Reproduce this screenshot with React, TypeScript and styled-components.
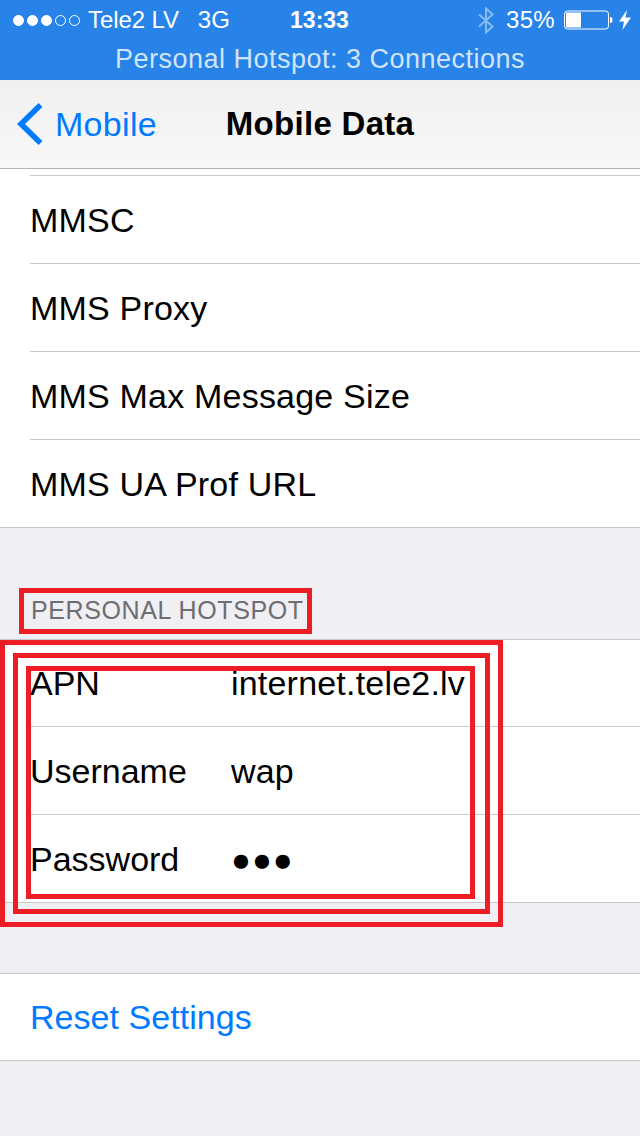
import { createGlobalStyle, styled } from "styled-components"

const Global = createGlobalStyle`
    html, body {
        margin: 0;
        padding: 0;
        background: #efeff4;
        font-family: "Liberation Sans", Arial, sans-serif;
    }
`

const Page = styled.div`
    width: 640px;
    height: 1136px;
    overflow: hidden;
    background: #efeff4;
`

const StatusBar = styled.header`
    height: 80px;
    background: #2783e8;
    color: #fff;
`

const StatusRow = styled.div`
    height: 40px;
    padding: 0 9px 0 13px;
    display: grid;
    grid-template-columns: 1fr auto 1fr;
    align-items: center;
    font-size: 24px;
`

const StatusLeft = styled.div`
    display: flex;
    align-items: center;
`

const StatusRight = styled.div`
    display: flex;
    align-items: center;
    justify-content: flex-end;
`

const Signal = styled.div`
    display: flex;
    gap: 3px;
    margin-right: 8px;
`

const SignalDot = styled.span<{ $on: boolean }>`
    width: 11px;
    height: 11px;
    box-sizing: border-box;
    border-radius: 50%;
    border: 1px solid #fff;
    background: ${(p) => (p.$on ? "#fff" : "transparent")};
`

const Carrier = styled.span`
    margin-right: 19px;
    letter-spacing: -0.1px;
`

const Clock = styled.span`
    margin-right: 5px;
    font-weight: 700;
    font-size: 23px;
`

const Percent = styled.span`
    margin: 0 9px 0 12px;
    letter-spacing: 0.3px;
`

const BoltSlot = styled.span`
    display: flex;
    margin-left: 6px;
`

const HotspotLine = styled.div`
    height: 40px;
    margin-top: -1px;
    display: flex;
    align-items: center;
    justify-content: center;
    font-size: 27px;
    letter-spacing: 0.5px;
    color: rgba(255, 255, 255, 0.8);
`

const NavBar = styled.nav`
    height: 88px;
    display: grid;
    grid-template-columns: 1fr auto 1fr;
    align-items: center;
    background: linear-gradient(#f0f0f0, #f8f8f8);
    border-bottom: 1px solid #b2b2b2;
`

const BackLink = styled.div`
    display: flex;
    align-items: center;
    gap: 12px;
    padding-left: 17px;
    font-size: 34px;
    letter-spacing: 0.3px;
    color: #007aff;
`

const Title = styled.h1`
    margin: 0;
    font-size: 33px;
    font-weight: 700;
    letter-spacing: 0.3px;
    color: #000;
`

const List = styled.section`
    position: relative;
    background: #fff;
    border-bottom: 1px solid #c8c7cc;
`

const TopList = styled(List)`
    padding-left: 30px;
`

const BorderedList = styled(List)`
    border-top: 1px solid #c8c7cc;
`

const ClippedRow = styled.div`
    height: 6px;
    border-bottom: 1px solid #c8c7cc;
`

const Row = styled.div`
    box-sizing: border-box;
    height: 88px;
    padding-top: 2px;
    display: flex;
    align-items: center;
    font-size: 34px;
    letter-spacing: 0.2px;
    color: #000;
    border-bottom: 1px solid #c8c7cc;
    &:last-child {
        height: 87px;
        border-bottom: none;
    }
`

const InsetRows = styled.div`
    margin-top: -1px;
    padding-left: 30px;
`

const Label = styled.span`
    width: 201px;
    letter-spacing: 0;
`

const Masked = styled.span`
    font-size: 33px;
    letter-spacing: 1px;
`

const ActionRow = styled(Row)`
    padding: 0 0 0 30px;
    &:last-child {
        height: 86px;
    }
    letter-spacing: 0.05px;
    color: #007aff;
`

const SectionHeader = styled.div`
    position: relative;
    height: 111px;
    box-sizing: border-box;
    padding: 67px 0 0 31px;
    font-size: 25px;
    letter-spacing: 0.6px;
    line-height: 30px;
    color: #6d6d72;
`

const ResetGap = styled.div`
    height: 70px;
`

const Annotation = styled.div<{ $top: number; $left: number; $width: number; $height: number }>`
    position: absolute;
    top: ${(p) => p.$top}px;
    left: ${(p) => p.$left}px;
    width: ${(p) => p.$width}px;
    height: ${(p) => p.$height}px;
    box-sizing: border-box;
    border: 5px solid #ee1c25;
    pointer-events: none;
`

function Bluetooth() {
    return (
        <svg width="16" height="27" viewBox="0 0 16 27" fill="none" stroke="#fff" strokeOpacity="0.45" strokeWidth="2">
            <path d="M1 7.5 L14.5 19.5 L8 25.5 V1.5 L14.5 7.5 L1 19.5" />
        </svg>
    )
}

function Battery() {
    return (
        <svg width="49" height="20" viewBox="0 0 49 20">
            <rect x="0.5" y="1" width="44" height="18" rx="3" fill="none" stroke="#fff" strokeWidth="1" />
            <rect x="2" y="2.5" width="15" height="15" fill="#fff" />
            <path d="M46 7 C48 7 48.5 8 48.5 10 C48.5 12 48 13 46 13 Z" fill="#fff" />
        </svg>
    )
}

function Bolt() {
    return (
        <svg width="12" height="20" viewBox="0 0 12 20">
            <path d="M8 0 L0 11.5 H5 L3.5 20 L12 7.5 H6.5 Z" fill="#fff" />
        </svg>
    )
}

function Chevron() {
    return (
        <svg width="26" height="42" viewBox="0 0 26 42" fill="none" stroke="#007aff" strokeWidth="5.5">
            <path d="M23.5 2 L4 21 L23.5 40" />
        </svg>
    )
}

const signal = [true, true, true, false, false]
const mmsRows = ["MMSC", "MMS Proxy", "MMS Max Message Size", "MMS UA Prof URL"]

export default function App() {
    return (
        <Page>
            <Global />
            <StatusBar>
                <StatusRow>
                    <StatusLeft>
                        <Signal>
                            {signal.map((on, i) => (
                                <SignalDot key={i} $on={on} />
                            ))}
                        </Signal>
                        <Carrier>Tele2 LV</Carrier>
                        <span>3G</span>
                    </StatusLeft>
                    <Clock>13:33</Clock>
                    <StatusRight>
                        <Bluetooth />
                        <Percent>35%</Percent>
                        <Battery />
                        <BoltSlot>
                            <Bolt />
                        </BoltSlot>
                    </StatusRight>
                </StatusRow>
                <HotspotLine>Personal Hotspot: 3 Connections</HotspotLine>
            </StatusBar>
            <NavBar>
                <BackLink>
                    <Chevron />
                    Mobile
                </BackLink>
                <Title>Mobile Data</Title>
            </NavBar>
            <TopList>
                <ClippedRow />
                {mmsRows.map((name) => (
                    <Row key={name}>{name}</Row>
                ))}
            </TopList>
            <SectionHeader>
                PERSONAL HOTSPOT
                <Annotation $top={60} $left={19} $width={293} $height={46} />
            </SectionHeader>
            <BorderedList>
                <InsetRows>
                    <Row>
                        <Label>APN</Label>
                        <span>internet.tele2.lv</span>
                    </Row>
                    <Row>
                        <Label>Username</Label>
                        <span>wap</span>
                    </Row>
                    <Row>
                        <Label>Password</Label>
                        <Masked>●●●</Masked>
                    </Row>
                </InsetRows>
                <Annotation $top={0} $left={0} $width={503} $height={287} />
                <Annotation $top={13} $left={13} $width={477} $height={261} />
                <Annotation $top={26} $left={26} $width={449} $height={233} />
            </BorderedList>
            <ResetGap />
            <BorderedList>
                <ActionRow>Reset Settings</ActionRow>
            </BorderedList>
        </Page>
    )
}
